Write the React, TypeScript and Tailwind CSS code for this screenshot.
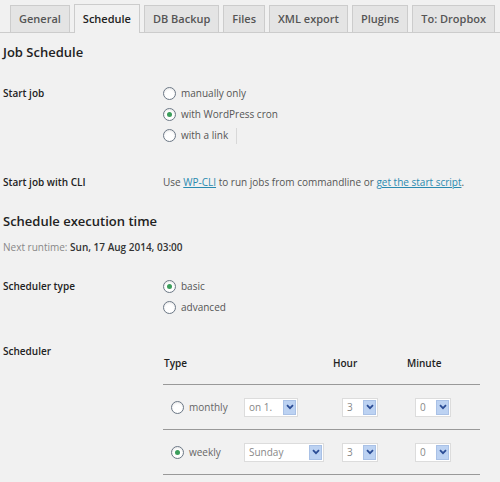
const tabs = ["General", "Schedule", "DB Backup", "Files", "XML export", "Plugins", "To: Dropbox"];

function Radio({ checked }: { checked?: boolean }) {
  return (
    <span className="inline-flex h-[13px] w-[13px] shrink-0 items-center justify-center rounded-full border border-[#6b7785] bg-white shadow-[inset_0_1px_2px_rgba(0,0,0,0.1)]">
      {checked && <span className="block h-[5px] w-[5px] rounded-full bg-[#3c9e5c]"></span>}
    </span>
  );
}

function Option({ label, checked, bar }: { label: string; checked?: boolean; bar?: boolean }) {
  return (
    <div className="flex h-[21px] items-center gap-[5px] text-[#555]">
      <Radio checked={checked} />
      <span>{label}</span>
      {bar && <span className="ml-[3px] h-[16px] border-l border-[#d8d8d8]"></span>}
    </div>
  );
}

function Select({ value, width }: { value: string; width: string }) {
  return (
    <div className={`flex h-[19px] items-center justify-between border border-[#dcdcdc] bg-white pl-[4px] pr-[1px] text-[#888] ${width}`}>
      <span>{value}</span>
      <span className="flex h-[15px] w-[13px] items-center justify-center border border-[#a9c1e6] bg-[#bcd2f2]">
        <svg width="8" height="6" viewBox="0 0 8 6">
          <path d="M1 1.2 L4 4.2 L7 1.2" fill="none" stroke="#2b4d96" strokeWidth="1.8" />
        </svg>
      </span>
    </div>
  );
}

export default function App() {
  return (
    <div className="h-[482px] w-[500px] overflow-hidden bg-[#f1f1f1] font-['Open_Sans',sans-serif] text-[10px] text-[#333]">
      <div className="flex gap-[4px] border-b border-[#ccc] pl-[10px] pt-[4px]">
        {tabs.map((t) =>
          t === "Schedule" ? (
            <div key={t} className="-mb-px flex h-[29px] items-center border border-b-0 border-[#ccc] bg-[#f1f1f1] px-[8px] text-[11px] font-semibold text-[#222]">
              {t}
            </div>
          ) : (
            <div key={t} className="mt-[1px] flex h-[27px] items-center border border-b-0 border-[#ccc] bg-[#e4e4e4] px-[8px] text-[11px] font-semibold text-[#555]">
              {t}
            </div>
          )
        )}
      </div>

      <div className="pl-[3px]">
        <h2 className="mt-[9px] h-[20px] text-[13px] leading-[20px] font-semibold text-[#222]">Job Schedule</h2>

        <div className="mt-[21px] flex">
          <div className="h-[21px] w-[160px] leading-[21px] font-semibold text-[#222]">Start job</div>
          <div>
            <Option label="manually only" />
            <Option label="with WordPress cron" checked />
            <Option label="with a link" bar />
          </div>
        </div>

        <div className="mt-[26px] flex h-[21px] items-center">
          <div className="w-[160px] font-semibold text-[#222]">Start job with CLI</div>
          <div className="text-[#555]">
            Use <span className="text-[#2a8ab0] underline">WP-CLI</span> to run jobs from commandline or{" "}
            <span className="text-[#2a8ab0] underline">get the start script</span>.
          </div>
        </div>

        <h2 className="mt-[18px] h-[20px] text-[13px] leading-[20px] font-semibold text-[#222]">Schedule execution time</h2>
        <div className="mt-[8px] h-[16px] text-[10px] leading-[16px] text-[#888]">
          Next runtime: <span className="font-semibold text-[#333]">Sun, 17 Aug 2014, 03:00</span>
        </div>

        <div className="mt-[21px] flex">
          <div className="h-[21px] w-[160px] leading-[21px] font-semibold text-[#222]">Scheduler type</div>
          <div>
            <Option label="basic" checked />
            <Option label="advanced" />
          </div>
        </div>

        <div className="mt-[23px] flex">
          <div className="h-[21px] w-[160px] leading-[21px] font-semibold text-[#222]">Scheduler</div>
          <div className="w-[317px]">
            <div className="grid grid-cols-[170px_74px_1fr] border-b border-[#999] pt-[12px] pb-[11px] leading-[20px] font-semibold text-[#222]">
              <div className="pl-[1px]">Type</div>
              <div>Hour</div>
              <div>Minute</div>
            </div>
            <div className="grid h-[45px] grid-cols-[81px_89px_74px_1fr] items-center border-b border-[#999] text-[#666]">
              <div className="flex items-center gap-[5px] pl-[8px]">
                <Radio />
                <span>monthly</span>
              </div>
              <Select value="on 1." width="w-[54px]" />
              <div className="pl-[9px]">
                <Select value="3" width="w-[36px]" />
              </div>
              <div className="pl-[8px]">
                <Select value="0" width="w-[36px]" />
              </div>
            </div>
            <div className="grid h-[45px] grid-cols-[81px_89px_74px_1fr] items-center border-b border-[#999] text-[#666]">
              <div className="flex items-center gap-[5px] pl-[8px]">
                <Radio checked />
                <span>weekly</span>
              </div>
              <Select value="Sunday" width="w-[80px]" />
              <div className="pl-[9px]">
                <Select value="3" width="w-[36px]" />
              </div>
              <div className="pl-[8px]">
                <Select value="0" width="w-[36px]" />
              </div>
            </div>
          </div>
        </div>
      </div>
    </div>
  );
}
